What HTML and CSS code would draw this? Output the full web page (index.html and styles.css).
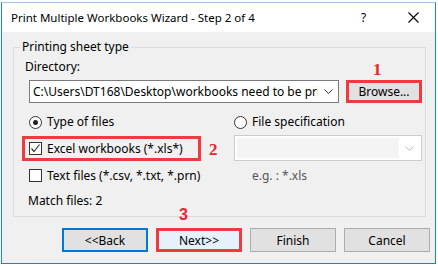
FILE: index.html
```html
<!DOCTYPE html>
<html lang="en">
<head>
    <meta charset="UTF-8">
    <title>Print Multiple Workbooks Wizard</title>
    <link rel="stylesheet" href="styles.css">
</head>
<body>

<div class="window">
    <div class="titlebar">
        <span class="title">Print Multiple Workbooks Wizard - Step 2 of 4</span>
        <span class="help">?</span>
        <svg class="close" width="11" height="11" viewBox="0 0 11 11">
            <path d="M0.5 0.5 L10.5 10.5 M10.5 0.5 L0.5 10.5" stroke="#000" stroke-width="1.1" fill="none"/>
        </svg>
    </div>

    <div class="content">
        <fieldset class="group">
            <legend>Printing sheet type</legend>

            <div class="label dir-label">Directory:</div>

            <div class="dir-row">
                <div class="combo">
                    <span class="combo-text">C:\Users\DT168\Desktop\workbooks need to be printed</span>
                    <svg class="chevron" width="9" height="5" viewBox="0 0 9 5">
                        <path d="M0.5 0.5 L4.5 4.5 L8.5 0.5" stroke="#333" fill="none"/>
                    </svg>
                </div>
                <div class="browse">
                    Browse...
                    <span class="mark mark-1">1</span>
                </div>
            </div>

            <div class="radio-row">
                <div class="option first">
                    <span class="radio checked"></span>
                    <span>Type of files</span>
                </div>
                <div class="option">
                    <span class="radio"></span>
                    <span>File specification</span>
                </div>
            </div>

            <div class="excel-row">
                <div class="highlight">
                    <span class="check on">
                        <svg width="11" height="11" viewBox="0 0 11 11">
                            <path d="M1.5 5.5 L4 8.5 L9.5 1.5" stroke="#333" stroke-width="1.2" fill="none"/>
                        </svg>
                    </span>
                    <span>Excel workbooks (*.xls*)</span>
                </div>
                <span class="mark mark-2">2</span>
                <div class="combo disabled">
                    <span class="combo-field"></span>
                    <svg class="chevron" width="9" height="5" viewBox="0 0 9 5">
                        <path d="M0.5 0.5 L4.5 4.5 L8.5 0.5" stroke="#bbb" fill="none"/>
                    </svg>
                </div>
            </div>

            <div class="text-row">
                <div class="option text-opt">
                    <span class="check"></span>
                    <span>Text files (*.csv, *.txt, *.prn)</span>
                </div>
                <span class="hint">e.g. : *.xls</span>
            </div>

            <div class="label match">Match files: 2</div>
        </fieldset>

        <div class="buttons">
            <button class="btn default">&lt;&lt;Back</button>
            <button class="btn next">Next&gt;&gt;<span class="mark mark-3">3</span></button>
            <button class="btn">Finish</button>
            <button class="btn">Cancel</button>
        </div>
    </div>
</div>

</body>
</html>
```

FILE: styles.css
```css
body {
    margin: 0;
    background: #fff;
    font-family: "Noto Sans", sans-serif;
    font-size: 12px;
    color: #000;
}
.window {
    box-sizing: border-box;
    width: 435px;
    height: 262px;
    margin: 2px 0 0 1px;
    border: 1px solid #1883d7;
    border-top-color: #9cc7ee;
    background: #f0f0f0;
    display: flex;
    flex-direction: column;
}
.titlebar {
    height: 29px;
    background: #fff;
    display: flex;
    align-items: center;
    padding-left: 9px;
}
.title {
    flex: 1;
    font-size: 11.5px;
}
.help {
    width: 14px;
    margin-right: 33px;
}
.close {
    margin-right: 16px;
}
.content {
    flex: 1;
}
.group {
    margin: 7px 9px 0 11px;
    padding: 0 0 7px 15px;
    border: 1px solid #dcdcdc;
    min-width: 0;
}
.group legend {
    margin-left: -9px;
    padding: 0 2px;
    line-height: 16px;
}
.label {
    line-height: 16px;
}
.dir-label {
    margin: 4px 0 0 -4px;
}
.dir-row {
    display: flex;
    margin-top: 5px;
    height: 23px;
}
.combo {
    box-sizing: border-box;
    width: 310px;
    height: 23px;
    background: #fff;
    border: 1px solid #7a7a7a;
    display: flex;
    align-items: center;
    padding-left: 3px;
    overflow: hidden;
}
.combo-text {
    flex: 1;
    white-space: nowrap;
    overflow: hidden;
}
.chevron {
    margin: 0 5px 0 6px;
    flex: none;
}
.browse {
    position: relative;
    box-sizing: border-box;
    width: 76px;
    height: 23px;
    margin-left: 7px;
    border: 3px solid #ef3b3f;
    background: #e1e1e1;
    display: flex;
    align-items: center;
    justify-content: center;
}
.mark {
    position: absolute;
    color: #e8262b;
    font-family: "Liberation Serif", serif;
    font-weight: bold;
    font-size: 17px;
    line-height: 17px;
}
.mark-1 {
    top: -22px;
    left: 24px;
}
.mark-3 {
    top: -25px;
    left: 20px;
    font-family: "Liberation Sans", sans-serif;
    font-size: 16px;
}
.radio-row {
    display: flex;
    margin-top: 11px;
    height: 16px;
    line-height: 16px;
}
.option {
    display: flex;
    align-items: center;
    gap: 5px;
}
.option.first {
    width: 205px;
}
.option.text-opt {
    width: 223px;
}
.radio {
    box-sizing: border-box;
    width: 13px;
    height: 13px;
    border: 1px solid #333;
    border-radius: 50%;
    background: #fff;
    display: flex;
    align-items: center;
    justify-content: center;
}
.radio.checked::after {
    content: "";
    width: 5px;
    height: 5px;
    border-radius: 50%;
    background: #222;
}
.excel-row {
    display: flex;
    align-items: center;
    margin-top: 5px;
    height: 26px;
}
.highlight {
    box-sizing: border-box;
    width: 179px;
    height: 25px;
    margin-left: -7px;
    padding-left: 4px;
    border: 3px solid #ef3b3f;
    display: flex;
    align-items: center;
    gap: 5px;
}
.mark-2 {
    position: static;
    margin: 3px 0 0 8px;
    width: 25px;
}
.check {
    box-sizing: border-box;
    width: 13px;
    height: 13px;
    border: 1px solid #333;
    background: #fff;
    display: flex;
    align-items: center;
    justify-content: center;
}
.combo.disabled {
    width: 188px;
    height: 26px;
    border-color: #cccccc;
    background: #fff;
    padding: 2px;
}
.combo-field {
    flex: 1;
    align-self: stretch;
    background: #f4f4f4;
}
.text-row {
    display: flex;
    align-items: center;
    margin-top: 6px;
    height: 16px;
}
.hint {
    color: #555;
}
.match {
    margin-top: 10px;
    margin-left: -1px;
}
.buttons {
    display: flex;
    gap: 8px;
    margin: 11px 0 0 60px;
}
.btn {
    position: relative;
    box-sizing: border-box;
    width: 86px;
    height: 24px;
    padding: 0;
    border: 1px solid #adadad;
    background: #e1e1e1;
    font-family: "Noto Sans", sans-serif;
    font-size: 12px;
    color: #000;
}
.btn.default {
    border: 2px solid #0078d7;
}
.btn.next {
    border: 3px solid #ef3b3f;
    background: #e5f1fb;
}
```
